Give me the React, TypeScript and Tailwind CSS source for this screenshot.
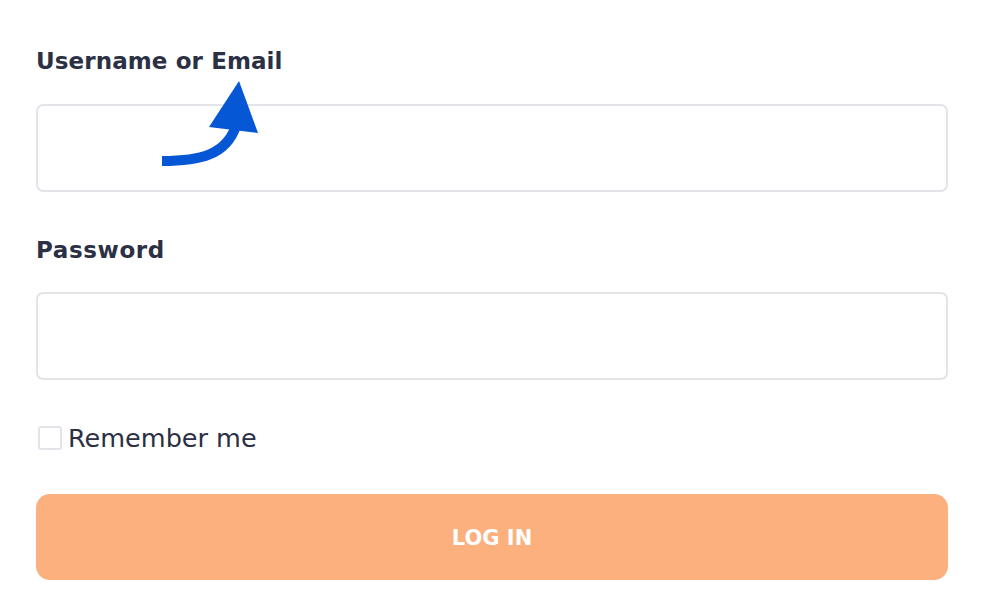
import { useState } from 'react';

/**
 * Login form with an annotation arrow pointing at the username label.
 */
export default function App() {
  const [remember, setRemember] = useState(false);

  return (
    <div
      className="min-h-[602px] w-full bg-white px-9 pt-[44px] text-[#2b3044]"
      style={{ fontFamily: '"DejaVu Sans", Inter, sans-serif' }}
    >
      <form className="relative flex flex-col" onSubmit={e => e.preventDefault()}>
        {/* Username */}
        <label className="text-[23px] font-bold leading-[34px] tracking-[0.1px]">Username or Email</label>
        <input
          type="text"
          className="mt-[26px] h-[88px] w-full rounded-[7px] border-2 border-[#e3e4ea] bg-white px-4 outline-none"
        />

        {/* Password */}
        <label className="mt-[41px] text-[23px] font-bold leading-[34px] tracking-[0.6px]">Password</label>
        <input
          type="password"
          className="mt-[25px] h-[88px] w-full rounded-[7px] border-2 border-[#e3e4ea] bg-white px-4 outline-none"
        />

        {/* Remember me */}
        <label className="mt-[41px] flex items-center gap-[6px] pl-[2px] text-[25.5px] leading-[34px]">
          <span
            onClick={() => setRemember(!remember)}
            className={`h-[24px] w-[24px] rounded-[3px] border-2 ${remember ? 'border-[#0657d6] bg-[#0657d6]' : 'border-[#e3e4ea] bg-white'}`}
          />
          Remember me
        </label>

        <button
          type="submit"
          className="mt-[39px] h-[86px] w-full rounded-[14px] bg-[#fcb07e] pt-[4px] text-[21px] font-bold text-white"
        >
          LOG IN
        </button>

        {/* Annotation arrow */}
        <svg
          className="pointer-events-none absolute left-[-36px] top-[-44px]"
          width="300"
          height="200"
          viewBox="0 0 300 200"
        >
          <path d="M162 161 C200 161 226 155 236 126" fill="none" stroke="#0657d6" strokeWidth="10" />
          <polygon points="239,81 209,127 258,133" fill="#0657d6" />
        </svg>
      </form>
    </div>
  );
}
